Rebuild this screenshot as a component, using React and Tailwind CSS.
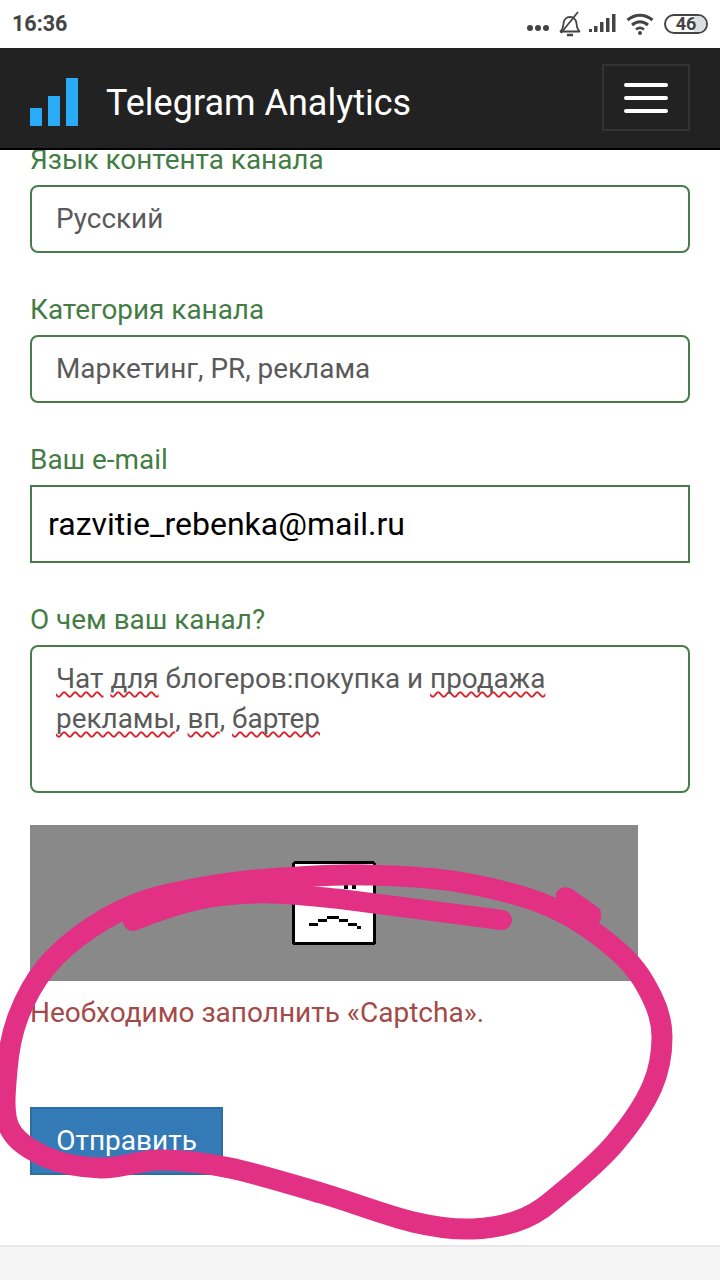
import React from "react";

const labelCls = "block h-10 mb-[5px] text-[27.9px] leading-10 text-[#437c44]";
const fieldCls = "flex items-center w-full h-[68px] pl-[24px] pr-6 border-2 border-[#4a7c4b] rounded-lg text-[27.9px] text-[#5a5a5a] bg-white";

function Spell({ children }) {
  return <span className="underline decoration-wavy decoration-[#d9242c] decoration-[1.5px] underline-offset-[3px] [text-decoration-skip-ink:none]">{children}</span>;
}

function StatusIcons() {
  return (
    <div className="flex items-center text-[#444]">
      <svg width="24" height="8" viewBox="0 0 24 8" className="mr-[8px] mt-2"><circle cx="4" cy="4" r="3" fill="#444"/><circle cx="12" cy="4" r="3" fill="#444"/><circle cx="20" cy="4" r="3" fill="#444"/></svg>
      <svg width="24" height="26" viewBox="0 0 24 26" fill="none" stroke="#444" strokeWidth="1.8" className="mr-[7px]">
        <path d="M2 20.500c2.800-1.500 3.200-4.500 3.500-8 .3-3.800 2.800-6.500 6.500-6.500s6.200 2.700 6.500 6.500c.3 3.500.7 6.500 3.500 8z"/>
        <path d="M9 24h6" strokeWidth="2.500"/>
        <path d="M3 22 20 1"/>
      </svg>
      <svg width="28" height="20" viewBox="0 0 28 20" className="mr-[9px]" fill="#444">
        <rect x="0" y="15" width="3" height="3"/><rect x="5" y="12" width="3.500" height="6"/><rect x="11" y="8" width="3.500" height="10"/><rect x="17" y="4" width="3.500" height="14"/><rect x="23" y="0" width="3.500" height="18"/>
      </svg>
      <svg width="28" height="22" viewBox="0 0 28 22" fill="none" stroke="#444" strokeWidth="3" className="mr-[10px]">
        <path d="M1.500 7C9 .5 19 .5 26.500 7"/>
        <path d="M6 12c5-4.200 11-4.200 16 0"/>
        <path d="M10 16.500c2.500-2 5.500-2 8 0" strokeWidth="2.500"/>
        <circle cx="14" cy="20" r="2" fill="#444" stroke="none"/>
      </svg>
      <div className="relative w-[44px] h-[20px] rounded-full border-2 border-[#444] flex items-center justify-center overflow-hidden">
        <div className="absolute right-0 top-0 bottom-0 w-[12px] bg-[#ddd]"></div>
        <span className="relative text-[18px] font-bold leading-none text-[#444] font-['Roboto',sans-serif]">46</span>
      </div>
    </div>
  );
}

function BrokenImage() {
  return (
    <svg width="84" height="84" viewBox="0 0 84 84" shapeRendering="crispEdges">
      <rect x="1.500" y="1.500" width="81" height="81" rx="2" fill="#fff" stroke="#000" strokeWidth="3"/>
      <g fill="#000">
        <rect x="17" y="62" width="9" height="3"/>
        <rect x="26" y="58" width="9" height="3"/>
        <rect x="35" y="55" width="12" height="3"/>
        <rect x="47" y="58" width="9" height="3"/>
        <rect x="56" y="62" width="9" height="3"/>
        <rect x="65" y="65" width="4" height="3"/>
        <rect x="52" y="24" width="4" height="4"/>
        <rect x="60" y="24" width="4" height="4"/>
      </g>
    </svg>
  );
}

const loop = [
  [367, 875], [459, 882], [551, 907], [620, 953], [652, 997], [662, 1037], [652, 1087], [615, 1143],
  [565, 1190], [525, 1218], [473, 1229], [413, 1222], [321, 1193], [230, 1168], [161, 1160], [101, 1168],
  [46, 1157], [9, 1127], [7, 1070], [18, 1017], [46, 967], [92, 927], [147, 900], [230, 883], [298, 877],
];

function closedSpline(pts) {
  const n = pts.length;
  let d = `M${pts[0][0]} ${pts[0][1]}`;
  for (let i = 0; i < n; i++) {
    const p0 = pts[(i - 1 + n) % n];
    const p1 = pts[i];
    const p2 = pts[(i + 1) % n];
    const p3 = pts[(i + 2) % n];
    const c1x = p1[0] + (p2[0] - p0[0]) / 6;
    const c1y = p1[1] + (p2[1] - p0[1]) / 6;
    const c2x = p2[0] - (p3[0] - p1[0]) / 6;
    const c2y = p2[1] - (p3[1] - p1[1]) / 6;
    d += `C${c1x} ${c1y} ${c2x} ${c2y} ${p2[0]} ${p2[1]}`;
  }
  return d + "Z";
}

export default function App() {
  return (
    <div className="relative w-[720px] h-[1280px] overflow-hidden bg-white flex flex-col font-['Roboto',sans-serif]">
      <div className="relative z-10 h-12 shrink-0 bg-white flex items-center justify-between pl-3 pr-[12px]">
        <span className="text-[21.5px] font-bold text-[#444]">16:36</span>
        <StatusIcons />
      </div>
      <header className="relative z-10 h-[102px] shrink-0 bg-[#222] border-b-2 border-black flex items-center pl-[30px] pr-[30px]">
        <svg width="48" height="48" viewBox="0 0 48 48" className="shrink-0 mt-[8px]">
          <rect x="0" y="30" width="12" height="18" fill="#29abf5"/>
          <rect x="18" y="18" width="12" height="30" fill="#29abf5"/>
          <rect x="36" y="0" width="12" height="48" fill="#29abf5"/>
        </svg>
        <span className="ml-[28px] mt-[9px] text-[36px] text-white leading-none">Telegram Analytics</span>
        <button className="ml-auto mb-[1px] w-[88px] h-[67px] border-2 border-[#333] flex flex-col items-center justify-center gap-[9px]">
          <span className="block w-[44px] h-[4px] rounded-full bg-white"></span>
          <span className="block w-[44px] h-[4px] rounded-full bg-white"></span>
          <span className="block w-[44px] h-[4px] rounded-full bg-white"></span>
        </button>
      </header>

      <main className="flex-1 px-[30px] -mt-[10px]">
        <label className={labelCls}>Язык контента канала</label>
        <div className={fieldCls}>Русский</div>

        <label className={`${labelCls} mt-[37px]`}>Категория канала</label>
        <div className={fieldCls}>Маркетинг, PR, реклама</div>

        <label className={`${labelCls} mt-[37px]`}>Ваш e-mail</label>
        <div className="flex items-center w-full h-[78px] px-4 border-2 border-[#4a7c4b] text-[32px] text-black bg-white">razvitie_rebenka@mail.ru</div>

        <label className={`${labelCls} mt-[37px]`}>О чем ваш канал?</label>
        <div className="w-full h-[148px] px-6 pt-[12px] border-2 border-[#4a7c4b] rounded-lg text-[27.9px] leading-10 text-[#5a5a5a] bg-white">
          <Spell>Чат</Spell> <Spell>для</Spell> блогеров:покупка и <Spell>продажа</Spell>
          <br />
          <Spell>рекламы</Spell>, <Spell>вп</Spell>, <Spell>бартер</Spell>
        </div>

        <div className="mt-[32px] w-[608px] h-[156px] bg-[#898989] flex items-center justify-center pb-[1px]">
          <BrokenImage />
        </div>

        <p className="mt-[12px] h-10 text-[28px] leading-10 text-[#a34a48]">Необходимо заполнить «Captcha».</p>

        <button className="mt-[74px] w-[193px] h-[68px] bg-[#337ab7] border-2 border-[#2e6da4] text-[28px] text-white">Отправить</button>
      </main>

      <footer className="h-[35px] shrink-0 bg-[#f5f5f5] border-t-2 border-[#e7e7e7]"></footer>

      <svg className="absolute left-0 top-0 z-20 pointer-events-none" width="720" height="1280" viewBox="0 0 720 1280" fill="none" stroke="#e23085" strokeWidth="21" strokeLinecap="round" strokeLinejoin="round">
        <path d={closedSpline(loop)} />
        <path d="M133 921C165 908 200 897 230 895C270 891 300 895 340 899C390 905 440 912 502 920" strokeWidth="20" />
        <path d="M556 893Q562 884 572 889L600 909Q604 922 594 926L556 905Z" fill="#e23085" stroke="none" />
      </svg>
    </div>
  );
}
